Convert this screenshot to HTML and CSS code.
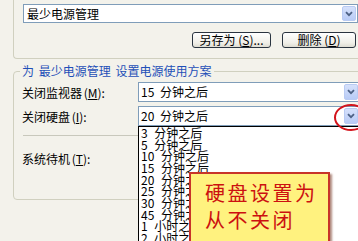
FILE: index.html
```html
<!DOCTYPE html>
<html lang="zh-CN">
<head>
<meta charset="utf-8">
<title>电源选项</title>
<link rel="stylesheet" href="styles.css">
</head>
<body>
<div class="top-group">
  <div class="combo combo-top">
    <span class="combo-text">最少电源管理</span>
    <span class="drop-btn"><svg width="8" height="6" viewBox="0 0 8 6"><path d="M1 1.2 L4 4.2 L7 1.2" fill="none" stroke="#4d6185" stroke-width="1.8"/></svg></span>
  </div>
  <div class="btn-row">
    <span class="btn btn-save">另存为 (<u>S</u>)...</span>
    <span class="btn btn-del">删除 (<u>D</u>)</span>
  </div>
</div>

<div class="group2">
  <div class="group-title">为 最少电源管理 设置电源使用方案</div>
  <div class="row row-first">
    <span class="label">关闭监视器 (<u>M</u>):</span>
    <div class="combo combo-row">
      <span class="combo-text">15 分钟之后</span>
      <span class="drop-btn"><svg width="8" height="6" viewBox="0 0 8 6"><path d="M1 1.2 L4 4.2 L7 1.2" fill="none" stroke="#4d6185" stroke-width="1.8"/></svg></span>
    </div>
  </div>
  <div class="row row-second">
    <span class="label">关闭硬盘 (<u>I</u>):</span>
    <div class="combo combo-row">
      <span class="combo-text">20 分钟之后</span>
      <span class="drop-btn"><svg width="8" height="6" viewBox="0 0 8 6"><path d="M1 1.2 L4 4.2 L7 1.2" fill="none" stroke="#4d6185" stroke-width="1.8"/></svg></span>
    </div>
  </div>
  <div class="separator"></div>
  <div class="row row-third">
    <span class="label">系统待机 (<u>T</u>):</span>
  </div>
</div>

<ul class="drop-list">
  <li>3 分钟之后</li>
  <li>5 分钟之后</li>
  <li>10 分钟之后</li>
  <li>15 分钟之后</li>
  <li>20 分钟之后</li>
  <li>25 分钟之后</li>
  <li>30 分钟之后</li>
  <li>45 分钟之后</li>
  <li>1 小时之后</li>
  <li>2 小时之后</li>
</ul>

<div class="mark-circle"></div>

<div class="callout">硬盘设置为<br>从不关闭</div>
</body>
</html>
```

FILE: styles.css
```css
html, body {
  margin: 0;
  padding: 0;
}
body {
  width: 358px;
  height: 241px;
  overflow: hidden;
  position: relative;
  background: #f3f2eb;
  font-family: "Noto Sans CJK SC", sans-serif;
  font-size: 12px;
  color: #000;
}
u {
  text-decoration: underline;
  text-underline-offset: 1px;
}

.top-group {
  box-sizing: border-box;
  margin-left: 13px;
  width: 400px;
  height: 59px;
  padding: 4px 0 0 9px;
  border-left: 1px solid #d0d0bf;
  border-bottom: 1px solid #d0d0bf;
  border-bottom-left-radius: 4px;
}

.combo {
  box-sizing: border-box;
  display: flex;
  align-items: center;
  justify-content: space-between;
  background: #fff;
  border: 1px solid #7f9db9;
  line-height: 16px;
}
.combo-top {
  width: 335px;
  height: 19px;
  padding-left: 3px;
}
.combo-row {
  width: 222px;
  height: 20px;
  padding-left: 2px;
  word-spacing: 3px;
}
.drop-btn {
  box-sizing: border-box;
  width: 14px;
  height: 15px;
  margin-right: 1px;
  display: flex;
  align-items: center;
  justify-content: center;
  border: 1px solid #b9cbf3;
  border-radius: 2px;
  background: linear-gradient(#d6e1fb, #b8cbf6);
}
.combo-row .drop-btn {
  margin-right: 1px;
  height: 16px;
}

.btn-row {
  display: flex;
  gap: 11px;
  margin-top: 9px;
  padding-left: 169px;
}
.btn {
  box-sizing: border-box;
  height: 16px;
  display: flex;
  align-items: center;
  justify-content: center;
  border: 1px solid #2a3440;
  border-radius: 3px;
  background: linear-gradient(#ffffff, #f0efe8 70%, #dedcd2);
  line-height: 14px;
  white-space: pre;
}
.btn-save { width: 79px; }
.btn-del { width: 74px; }

.group2 {
  box-sizing: border-box;
  margin: 12px 0 0 13px;
  width: 400px;
  height: 129px;
  border: 1px solid #d0d0bf;
  border-radius: 4px;
  padding-left: 8px;
}
.group-title {
  width: fit-content;
  margin: -9px 0 0 -2px;
  padding: 0 3px 0 2px;
  background: #f3f2eb;
  color: #1f50b8;
  line-height: 16px;
  word-spacing: 2px;
}
.row {
  display: flex;
  align-items: center;
  height: 20px;
}
.row-first { margin-top: 3px; }
.row-second { margin-top: 4px; }
.row-third { margin-top: 12px; }
.label {
  width: 116px;
  flex: none;
  word-spacing: -1px;
}
.separator {
  margin: 9px 0 0 1px;
  height: 1px;
  background: #c8c8bc;
  width: 300px;
}

.drop-list {
  position: absolute;
  left: 138px;
  top: 126px;
  width: 222px;
  height: 130px;
  margin: 0;
  padding: 0 0 0 2px;
  box-sizing: border-box;
  list-style: none;
  background: #fff;
  border: 1px solid #000;
  word-spacing: 4px;
}
.drop-list li {
  height: 11.67px;
  line-height: 11.67px;
  white-space: nowrap;
}

.mark-circle {
  position: absolute;
  left: 334px;
  top: 104px;
  width: 34px;
  height: 27px;
  box-sizing: border-box;
  border: 2.5px solid #d3141c;
  border-radius: 50%;
}

.callout {
  position: absolute;
  left: 189px;
  top: 172px;
  width: 141px;
  height: 90px;
  box-sizing: border-box;
  padding: 5px 0 0 14px;
  background: #fff27f;
  border: 2px solid #c8342a;
  box-shadow: 2px 2px 2px rgba(110, 40, 20, 0.55);
  color: #cc1010;
  font-size: 20px;
  line-height: 27px;
  letter-spacing: 2.5px;
}
```
